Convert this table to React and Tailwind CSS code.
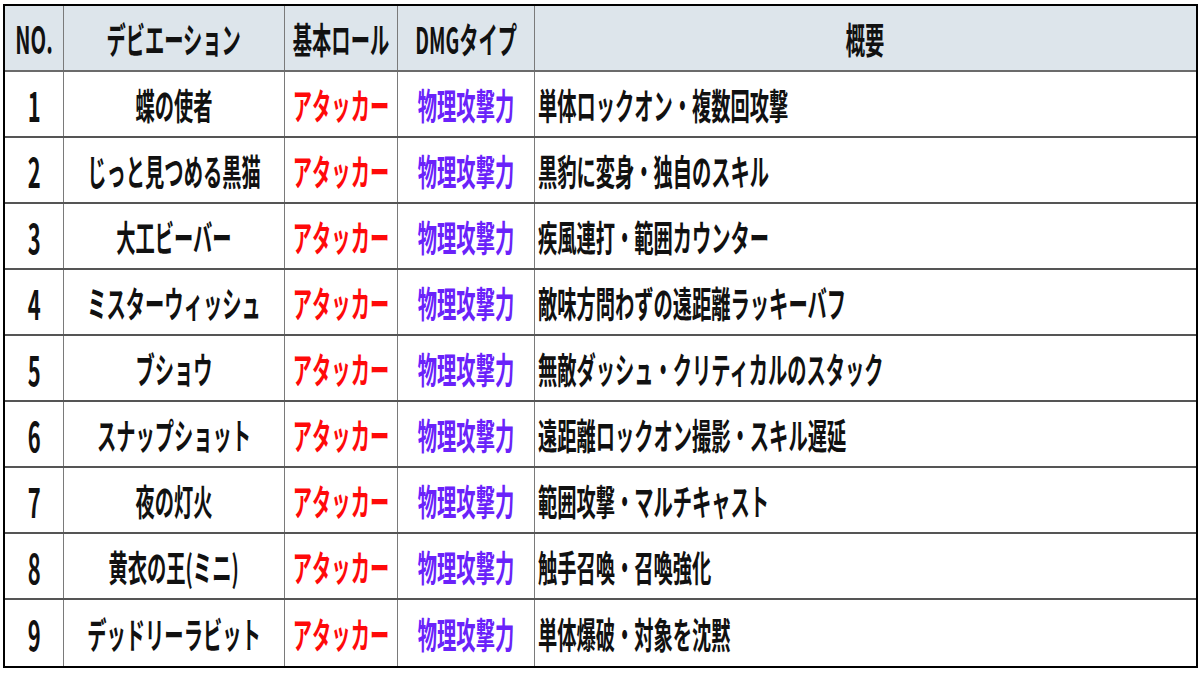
import React from "react";

const rows = [
  ["1", "蝶の使者", "単体ロックオン・複数回攻撃"],
  ["2", "じっと見つめる黒猫", "黒豹に変身・独自のスキル"],
  ["3", "大工ビーバー", "疾風連打・範囲カウンター"],
  ["4", "ミスターウィッシュ", "敵味方問わずの遠距離ラッキーバフ"],
  ["5", "ブショウ", "無敵ダッシュ・クリティカルのスタック"],
  ["6", "スナップショット", "遠距離ロックオン撮影・スキル遅延"],
  ["7", "夜の灯火", "範囲攻撃・マルチキャスト"],
  ["8", "黄衣の王(ミニ)", "触手召喚・召喚強化"],
  ["9", "デッドリーラビット", "単体爆破・対象を沈黙"],
];

// 縦長に見える文字（横方向を縮める）
function Txt({ children, className = "" }) {
  return (
    <span
      className={`inline-block whitespace-nowrap text-[36px] leading-none font-bold scale-x-[0.535] ${className}`}
    >
      {children}
    </span>
  );
}

function Cell({ children, left, last }) {
  return (
    <div
      className={`flex items-center overflow-visible ${
        left ? "justify-start pl-[3px]" : "justify-center"
      } ${last ? "" : "border-r border-[#7a7a7a]"}`}
    >
      {children}
    </div>
  );
}

function Row({ cells, header, last }) {
  return (
    <div
      className={`grid grid-cols-[59px_221px_113px_137px_1fr] h-[66px] ${
        header ? "bg-[#dde5eb] border-b-2 border-[#6b6b6b]" : last ? "" : "border-b-2 border-[#555]"
      }`}
    >
      {cells}
    </div>
  );
}

export default function App() {
  return (
    <div
      className="w-[1200px] h-[675px] bg-white pt-[4px] pl-[3px] text-[#111]"
      style={{ fontFamily: '"Noto Sans CJK JP", "Noto Sans", sans-serif' }}
    >
      <div className="w-[1195px] border-2 border-black">
        <Row
          header
          cells={
            <>
              <Cell><Txt className="text-[38px]">NO.</Txt></Cell>
              <Cell><Txt>デビエーション</Txt></Cell>
              <Cell><Txt>基本ロール</Txt></Cell>
              <Cell><Txt>DMGタイプ</Txt></Cell>
              <Cell last><Txt>概要</Txt></Cell>
            </>
          }
        />
        {rows.map(([no, name, desc], i) => (
          <Row
            key={no}
            last={i === rows.length - 1}
            cells={
              <>
                <Cell><Txt className="text-[41px]">{no}</Txt></Cell>
                <Cell><Txt>{name}</Txt></Cell>
                <Cell><Txt className="text-[#ff0a0a]">アタッカー</Txt></Cell>
                <Cell><Txt className="text-[#6a22fa]">物理攻撃力</Txt></Cell>
                <Cell left last><Txt className="origin-left">{desc}</Txt></Cell>
              </>
            }
          />
        ))}
      </div>
    </div>
  );
}
